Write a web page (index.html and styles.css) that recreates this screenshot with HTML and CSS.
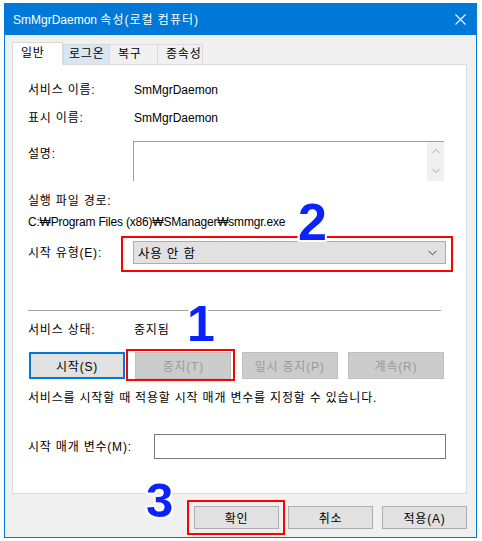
FILE: index.html
```html
<!doctype html>
<html lang="ko">
<head>
    <meta charset="UTF-8">
    <title>SmMgrDaemon 속성(로컬 컴퓨터)</title>
    <link rel="stylesheet" href="styles.css">
</head>
<body>

<div class="window">
    <div class="titlebar">
        <span class="title">SmMgrDaemon <span class="ko title-ko">속성(로컬 컴퓨터)</span></span>
        <svg class="close" width="11" height="11" viewBox="0 0 11 11">
            <path d="M0.5 0.5 L10.5 10.5 M10.5 0.5 L0.5 10.5" stroke="#fff" stroke-width="1.1" fill="none"/>
        </svg>
    </div>

    <div class="content">
        <div class="tabs">
            <div class="tab tab-active ko">일반</div>
            <div class="tab tab-hover ko">로그온</div>
            <div class="tab ko">복구</div>
            <div class="tab tab-last ko">종속성</div>
        </div>

        <div class="panel">
            <div class="row row-first">
                <span class="label ko">서비스 이름:</span>
                <span class="value">SmMgrDaemon</span>
            </div>
            <div class="row row-name">
                <span class="label ko">표시 이름:</span>
                <span class="value">SmMgrDaemon</span>
            </div>
            <div class="row row-desc">
                <span class="label label-top ko">설명:</span>
                <div class="desc-box">
                    <div class="desc-text"></div>
                    <div class="scrollbar">
                        <svg width="8" height="6" viewBox="0 0 8 6"><polyline points="0.5,5 4,1.5 7.5,5" stroke="#c4c4c4" stroke-width="1.2" fill="none"/></svg>
                        <svg width="8" height="6" viewBox="0 0 8 6"><polyline points="0.5,1 4,4.5 7.5,1" stroke="#c4c4c4" stroke-width="1.2" fill="none"/></svg>
                    </div>
                </div>
            </div>
            <div class="line line-path-label ko">실행 파일 경로:</div>
            <div class="line line-path">C:₩Program Files (x86)₩SManager₩smmgr.exe</div>
            <div class="row row-type">
                <span class="label ko">시작 유형(E):</span>
                <div class="combo">
                    <span class="ko">사용 안 함</span>
                    <svg width="9" height="6" viewBox="0 0 9 6"><polyline points="0.5,0.8 4.5,4.8 8.5,0.8" stroke="#444" stroke-width="1" fill="none"/></svg>
                </div>
            </div>

            <div class="separator"></div>

            <div class="row row-status">
                <span class="label ko">서비스 상태:</span>
                <span class="value ko">중지됨</span>
            </div>
            <div class="service-buttons">
                <button class="btn btn-focus ko">시작(S)</button>
                <button class="btn ko" disabled>중지(T)</button>
                <button class="btn ko" disabled>일시 중지(P)</button>
                <button class="btn ko" disabled>계속(R)</button>
            </div>
            <div class="line line-help ko">서비스를 시작할 때 적용할 시작 매개 변수를 지정할 수 있습니다.</div>
            <div class="row row-param">
                <span class="label label-param ko">시작 매개 변수(M):</span>
                <div class="param-input"></div>
            </div>
        </div>

        <div class="footer">
            <button class="btn btn-footer ko">확인</button>
            <button class="btn btn-footer ko">취소</button>
            <button class="btn btn-footer ko">적용(A)</button>
        </div>
    </div>

    <!-- annotations -->
    <div class="mark mark-type"></div>
    <div class="mark mark-stop"></div>
    <div class="mark mark-ok"></div>
    <span class="num num-2">2</span>
    <span class="num num-1">1</span>
    <span class="num num-3">3</span>
</div>

</body>
</html>
```

FILE: styles.css
```css
body {
    margin: 0;
    background: #fff;
    font-family: "Liberation Sans", "Noto Sans CJK KR", sans-serif;
    font-size: 12px;
    color: #000;
}

.ko {
    letter-spacing: 0.8px;
}

.window {
    position: relative;
    box-sizing: border-box;
    width: 473px;
    height: 535px;
    margin: 3px 0 0 4px;
    border: 1px solid #0078d7;
    background: #f0f0f0;
}

.titlebar {
    display: flex;
    align-items: center;
    justify-content: space-between;
    height: 31px;
    padding: 0 10px 0 8px;
    background: #0078d7;
    color: #fff;
}

.title {
    line-height: 16px;
}

.title-ko {
    letter-spacing: 1px;
}

.content {
    padding: 7px 9px 0 7px;
}

.tabs {
    display: flex;
    align-items: flex-end;
    height: 22px;
    position: relative;
    z-index: 1;
}

.tab {
    box-sizing: border-box;
    height: 20px;
    padding-left: 8px;
    border: 1px solid #d9d9d9;
    border-bottom: none;
    border-right: none;
    background: #f0f0f0;
    line-height: 18px;
    white-space: nowrap;
}

.tab:nth-child(2) { width: 46px; padding-left: 5px; }
.tab:nth-child(3) { width: 48px; }
.tab:nth-child(4) { width: 46px; }

.tab-last {
    border-right: 1px solid #d9d9d9;
}

.tab-hover {
    background: #d8e6f2;
}

.tab-active {
    width: 51px;
    height: 23px;
    margin-bottom: -1px;
    border-right: 1px solid #d9d9d9;
    background: #fff;
    line-height: 20px;
}

.panel {
    box-sizing: border-box;
    height: 430px;
    padding: 0 20px 0 15px;
    border: 1px solid #d9d9d9;
    background: #fff;
}

.row {
    display: flex;
    align-items: center;
}

.label {
    width: 105px;
    flex: none;
    line-height: 16px;
    white-space: nowrap;
}

.value {
    margin-left: 1px;
    line-height: 16px;
}

.line {
    line-height: 16px;
    white-space: nowrap;
}

.row-first { margin-top: 17px; }
.row-name { margin-top: 12px; }

.row-desc {
    align-items: flex-start;
    margin-top: 15px;
}

.label-top {
    margin-top: 5px;
}

.desc-box {
    display: flex;
    width: 311px;
    height: 40px;
    box-sizing: border-box;
    border-top: 1px solid #a0a0a0;
    border-left: 1px solid #a0a0a0;
}

.desc-text {
    flex: 1;
}

.scrollbar {
    display: flex;
    flex-direction: column;
    align-items: center;
    justify-content: space-between;
    width: 17px;
    padding: 6px 0 7px;
    background: #f0f0f0;
}

.line-path-label { margin-top: 12px; }

.line-path {
    margin-top: 5px;
    letter-spacing: -0.2px;
}

.row-type { margin-top: 11px; }

.combo {
    flex: 1;
    display: flex;
    align-items: center;
    justify-content: space-between;
    box-sizing: border-box;
    height: 23px;
    padding: 0 8px 0 4px;
    border: 1px solid #adadad;
    background: #e1e1e1;
    font-size: 12.5px;
}

.separator {
    height: 1px;
    margin: 46px 5px 0 0;
    background: #a0a0a0;
}

.row-status { margin-top: 11px; }

.service-buttons {
    display: flex;
    justify-content: space-between;
    margin: 14px 2px 0 1px;
}

.btn {
    box-sizing: border-box;
    width: 96px;
    height: 27px;
    padding: 0;
    border: 1px solid #adadad;
    background: #e1e1e1;
    font-family: inherit;
    font-size: 12px;
    color: #000;
}

.btn:disabled {
    border-color: #bfbfbf;
    background: #cccccc;
    color: #9a9a9a;
}

.btn-focus {
    border: 2px solid #0078d7;
}

.line-help { margin-top: 11px; }

.row-param { margin-top: 28px; }

.label-param {
    width: 126px;
}

.param-input {
    flex: 1;
    box-sizing: border-box;
    height: 25px;
    border: 1px solid #7a7a7a;
    background: #fff;
}

.footer {
    display: flex;
    justify-content: flex-end;
    gap: 9px;
    margin-top: 12px;
}

.btn-footer {
    width: 85px;
    height: 23px;
}

/* annotations over the dialog */
.mark {
    position: absolute;
    box-sizing: border-box;
    border: 2px solid #ff0000;
}

.mark-type { left: 116px; top: 232px; width: 332px; height: 36px; }
.mark-stop { left: 121px; top: 345px; width: 109px; height: 32px; }
.mark-ok { left: 182px; top: 496px; width: 98px; height: 35px; }

.num {
    position: absolute;
    font-family: "Liberation Sans", Arial, sans-serif;
    font-weight: bold;
    line-height: 1;
    color: #0a22fb;
    text-shadow: 2px 0 #fff, -2px 0 #fff, 0 2px #fff, 0 -2px #fff,
                 2px 2px #fff, -2px -2px #fff, 2px -2px #fff, -2px 2px #fff;
}

.num-2 { left: 293px; top: 192px; font-size: 52px; }
.num-1 { left: 182px; top: 295px; font-size: 50px; }
.num-3 { left: 141px; top: 472px; font-size: 49px; }
```
